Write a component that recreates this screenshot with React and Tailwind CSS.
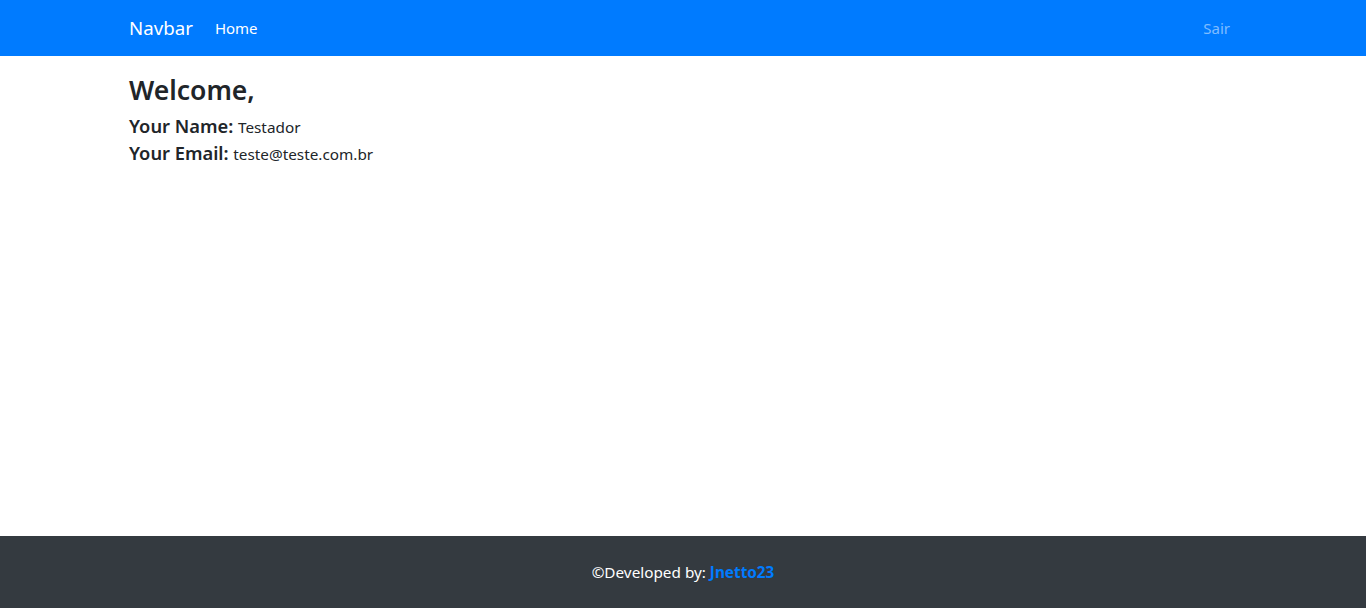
export default function App() {
  return (
    <div className="flex flex-col h-screen bg-white text-[#212529]" style={{ fontFamily: '"Noto Sans", "Open Sans", sans-serif' }}>
      <Navbar />
      <main className="flex-1">
        <div className="mx-auto w-[1140px] px-[15px] pl-[16px]">
          <h3 className="mt-[17px] mb-[6px] text-[26.5px] font-semibold leading-[34px]">Welcome,</h3>
          <h5 className="text-[18.3px] font-semibold leading-[26px]">
            Your Name: <small className="text-[15.3px] font-normal">Testador</small>
          </h5>
          <h5 className="text-[18.3px] font-semibold leading-[26px]">
            Your Email: <small className="text-[15.3px] font-normal">teste@teste.com.br</small>
          </h5>
        </div>
      </main>
      <footer className="h-[72px] shrink-0 bg-[#343a40] flex items-center justify-center text-white text-[15.3px]">
        <span>
          ©Developed by: <a href="#" className="font-bold text-[#007bff]">Jnetto23</a>
        </span>
      </footer>
    </div>
  );
}

function Navbar() {
  return (
    <nav className="h-14 shrink-0 bg-[#007bff]">
      <div className="mx-auto w-[1140px] h-full px-[15px] pl-[16px] flex items-center">
        <a href="#" className="text-white text-[18.7px] mr-[14px] leading-[30px]">Navbar</a>
        <a href="#" className="text-white text-[15px] px-2 leading-6">Home</a>
        <a href="#" className="ml-auto text-white/50 text-[15px] px-2 leading-6">Sair</a>
      </div>
    </nav>
  );
}
